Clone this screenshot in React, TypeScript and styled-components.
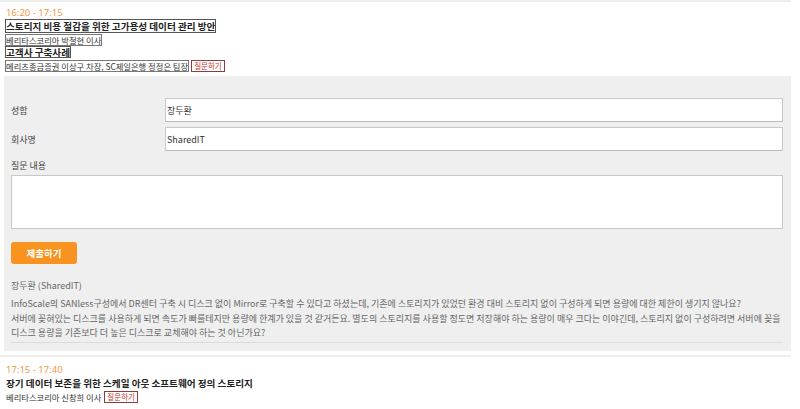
import styled, { createGlobalStyle } from "styled-components";

const GlobalStyle = createGlobalStyle`
	html, body {
		margin: 0;
		padding: 0;
		background: #fff;
	}
	body {
		font-family: "Noto Sans CJK KR", "Noto Sans", sans-serif;
		color: #333;
	}
`;

const Page = styled.div`
	width: 791px;
`;

const Session = styled.div<{ first?: boolean }>`
	border-top: 2px solid #eee;
	padding: ${ ({ first }) => first ? "5px 0 0 5px" : "7px 0 0 5px" };
	margin-top: ${ ({ first }) => first ? "0" : "4px" };
`;

const Time = styled.div`
	color: #f39a47;
	font-size: 9.5px;
	line-height: 12px;
	height: 12px;
	padding-left: 1px;
	font-family: "Noto Sans", sans-serif;
`;

const Title = styled.div<{ outlined?: boolean; tall?: boolean }>`
	font-size: 9.6px;
	font-weight: 700;
	line-height: ${ ({ tall }) => tall ? "14px" : "12px" };
	height: ${ ({ tall }) => tall ? "14px" : "12px" };
	color: #222;
	span {
		display: inline-block;
		${ ({ outlined }) => outlined && "outline: 1px solid #555; outline-offset: -1px;" }
		padding: 0 1px;
	}
`;

const Speaker = styled.div<{ outlined?: boolean; tall?: boolean }>`
	font-size: 8.3px;
	line-height: 12px;
	height: ${ ({ tall }) => tall ? "13px" : "12px" };
	margin-top: 1px;
	color: #333;
	display: flex;
	align-items: center;
	gap: 2px;
	> span {
		display: inline-block;
		${ ({ outlined }) => outlined && "outline: 1px solid #777; outline-offset: -1px;" }
		padding: 0 1px;
	}
`;

const AskButton = styled.button`
	font-family: inherit;
	font-size: 7.5px;
	line-height: 10px;
	height: 12px;
	color: #c0392b;
	background: #fff;
	border: 1px solid #8e3b3b;
	padding: 0 2px;
	cursor: pointer;
`;

const Panel = styled.div`
	background: #efefef;
	margin: 4px 0 0 4px;
	padding: 22px 8px 8px 7px;
`;

const Row = styled.div`
	display: grid;
	grid-template-columns: 154px 1fr;
	align-items: center;
	margin-bottom: 5px;
`;

const Label = styled.label`
	font-size: 9px;
	color: #444;
`;

const Input = styled.input`
	height: 24px;
	box-sizing: border-box;
	border: 1px solid #c8c8c8;
	border-bottom-color: #bbb;
	background: #fff;
	font-family: "Noto Sans CJK KR", "Noto Sans", sans-serif;
	font-size: 9px;
	color: #333;
	padding: 0 1px;
	outline: none;
`;

const FieldLabel = styled.div`
	font-size: 9px;
	color: #444;
	margin-top: 9px;
	line-height: 12px;
`;

const TextArea = styled.textarea`
	display: block;
	width: 100%;
	height: 54px;
	box-sizing: border-box;
	margin-top: 3px;
	border: 1px solid #c8c8c8;
	background: #fff;
	resize: none;
	outline: none;
`;

const Submit = styled.button`
	margin-top: 13px;
	width: 66px;
	height: 22px;
	background: #f7931e;
	color: #fff;
	border: none;
	border-radius: 3px;
	font-family: inherit;
	font-weight: 700;
	font-size: 9.5px;
	cursor: pointer;
`;

const Author = styled.div`
	margin-top: 16px;
	font-size: 9px;
	color: #666;
	line-height: 12px;
`;

const Question = styled.p`
	margin: 5px 0 0;
	font-size: 9px;
	line-height: 14.5px;
	color: #666;
	padding-bottom: 1px;
	border-bottom: 1px solid #dcdcdc;
`;

export default function App() {
	return (
		<Page>
			<GlobalStyle />
			<Session first>
				<Time>16:20 - 17:15</Time>
				<Title outlined tall><span>스토리지 비용 절감을 위한 고가용성 데이터 관리 방안</span></Title>
				<Speaker outlined><span>베리타스코리아 박철현 이사</span></Speaker>
				<Title outlined><span>고객사 구축사례</span></Title>
				<Speaker outlined tall>
					<span>메리츠종금증권 이상구 차장, SC제일은행 정정은 팀장</span>
					<AskButton>질문하기</AskButton>
				</Speaker>
			</Session>
			<Panel>
				<Row>
					<Label>성함</Label>
					<Input defaultValue="장두환" />
				</Row>
				<Row>
					<Label>회사명</Label>
					<Input defaultValue="SharedIT" />
				</Row>
				<FieldLabel>질문 내용</FieldLabel>
				<TextArea />
				<Submit>제출하기</Submit>
				<Author>장두환 (SharedIT)</Author>
				<Question>
					InfoScale의 SANless구성에서 DR센터 구축 시 디스크 없이 Mirror로 구축할 수 있다고 하셨는데, 기존에 스토리지가 있었던 환경 대비 스토리지 없이 구성하게 되면 용량에 대한 제한이 생기지 않나요?<br />
					서버에 꽂혀있는 디스크를 사용하게 되면 속도가 빠를테지만 용량에 한계가 있을 것 같거든요. 별도의 스토리지를 사용할 정도면 저장해야 하는 용량이 매우 크다는 이야긴데, 스토리지 없이 구성하려면 서버에 꽂을<br />
					디스크 용량을 기존보다 더 높은 디스크로 교체해야 하는 것 아닌가요?
				</Question>
			</Panel>
			<Session>
				<Time>17:15 - 17:40</Time>
				<Title tall><span>장기 데이터 보존을 위한 스케일 아웃 소프트웨어 정의 스토리지</span></Title>
				<Speaker>
					<span>베리타스코리아 신창희 이사</span>
					<AskButton>질문하기</AskButton>
				</Speaker>
			</Session>
		</Page>
	);
}
